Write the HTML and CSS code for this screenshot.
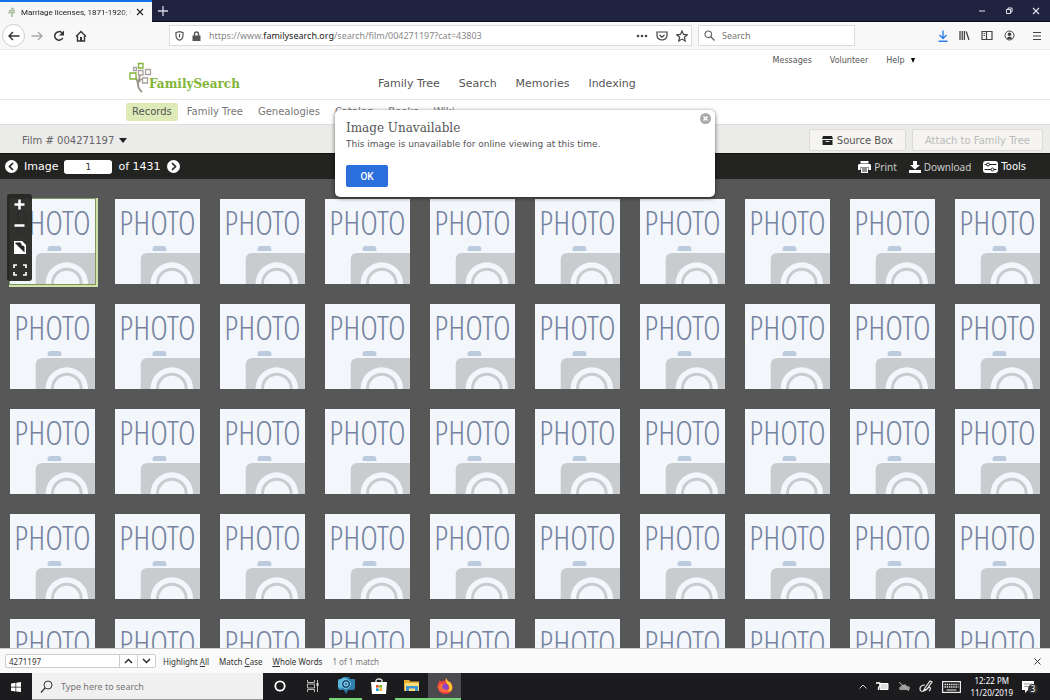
FILE: index.html
```
<!DOCTYPE html>
<html lang="en">
<head>
    <meta charset="UTF-8">
    <meta name="viewport" content="width=device-width, initial-scale=1.0">
    <title>Marriage licenses, 1871-1920</title>
    <link rel="stylesheet" href="styles.css">
</head>

<body>
    <!-- browser window -->
    <div class="title_bar">
        <div class="tab">
            <svg width="10" height="10" viewBox="0 0 10 10"><path d="M5 10V6M2 3.500h6M1 5.500h7M4 1.500h3" fill="none" stroke="#a9bd9b" stroke-width="1.600"/></svg>
            <span class="tab_title">Marriage licenses, 1871-1920; index</span>
            <button class="icon_button" aria-label="Close tab"><svg width="8" height="8" viewBox="0 0 8 8"><path d="M1 1l6 6M7 1L1 7" stroke="#222" stroke-width="1.1"/></svg></button>
        </div>
        <button class="icon_button new_tab" aria-label="New tab"><svg width="10" height="10" viewBox="0 0 10 10"><path d="M5 0v10M0 5h10" stroke="#d5d6e2" stroke-width="1.3"/></svg></button>
        <div class="window_buttons">
            <button class="icon_button" aria-label="Minimize"><svg width="8" height="8" viewBox="0 0 8 8"><path d="M1 4h6" stroke="#e2e3ee"/></svg></button>
            <button class="icon_button" aria-label="Restore"><svg width="8" height="8" viewBox="0 0 8 8"><path d="M1.500 2.500h4v4h-4zM3 2.500V1h4v4H5.500" fill="none" stroke="#e2e3ee"/></svg></button>
            <button class="icon_button" aria-label="Close"><svg width="8" height="8" viewBox="0 0 8 8"><path d="M1 1l6 6M7 1L1 7" stroke="#e2e3ee" stroke-width="1.100"/></svg></button>
        </div>
    </div>

    <div class="nav_bar">
        <div class="nav_buttons">
            <button class="icon_button back" aria-label="Back"><svg width="12" height="10" viewBox="0 0 12 10"><path d="M11.500 5H1M5 1L1 5l4 4" fill="none" stroke="#333" stroke-width="1.400"/></svg></button>
            <button class="icon_button" aria-label="Forward"><svg width="12" height="10" viewBox="0 0 12 10"><path d="M.5 5H11M7 1l4 4-4 4" fill="none" stroke="#aaa" stroke-width="1.400"/></svg></button>
            <button class="icon_button" aria-label="Reload"><svg width="12" height="12" viewBox="0 0 12 12"><path d="M9.800 8A4.300 4.300 0 1 1 9 2.800" fill="none" stroke="#333" stroke-width="1.500"/><path d="M11 .5v5H6z" fill="#333"/></svg></button>
            <button class="icon_button" aria-label="Home"><svg width="12" height="12" viewBox="0 0 12 12"><path d="M1 6.500L6 1.500l5 5M2.500 6v5h7V6" fill="none" stroke="#333" stroke-width="1.400"/><path d="M5 7h2v4H5z" fill="#333"/></svg></button>
        </div>
        <div class="url_box">
            <svg width="9" height="10" viewBox="0 0 9 10"><path d="M1 1.500L4.500.7 8 1.500v3Q8 8 4.500 9.300 1 8 1 4.500z" fill="none" stroke="#555" stroke-width="1.200"/><path d="M4.500 3v3.500" stroke="#555" stroke-width="1.200"/></svg>
            <svg width="9" height="10" viewBox="0 0 9 10"><path d="M2.500 5V3a2 2 0 0 1 4 0v2" fill="none" stroke="#555" stroke-width="1.400"/><path d="M.5 4.500h8V10h-8z" fill="#555"/></svg>
            <span class="url">https://www.<b>familysearch.org</b>/search/film/004271197?cat=43803</span>
            <button class="icon_button" aria-label="Page actions"><svg width="12" height="4" viewBox="0 0 12 4"><g fill="#444"><circle cx="2" cy="2" r="1.300"/><circle cx="6" cy="2" r="1.300"/><circle cx="10" cy="2" r="1.300"/></g></svg></button>
            <button class="icon_button" aria-label="Save to Pocket"><svg width="12" height="10" viewBox="0 0 12 10"><path d="M1 1h10v3.500a5 4.500 0 0 1-10 0zM3.500 4L6 6.300 8.500 4" fill="none" stroke="#444" stroke-width="1.200"/></svg></button>
            <button class="icon_button" aria-label="Bookmark"><svg width="12" height="12" viewBox="0 0 12 12"><path d="M6 1l1.500 3.400 3.700.4-2.800 2.500.8 3.700L6 9.100 2.800 11l.8-3.700L.8 4.800l3.700-.4z" fill="none" stroke="#444" stroke-width="1.200"/></svg></button>
        </div>
        <label class="search_box">
            <svg width="11" height="11" viewBox="0 0 11 11"><circle cx="4.300" cy="4.300" r="3.300" fill="none" stroke="#666" stroke-width="1.200"/><path d="M6.800 6.800L10.500 10.500" stroke="#666" stroke-width="1.300"/></svg>
            <input type="text" placeholder="Search" aria-label="Search the web">
        </label>
        <div class="browser_tools">
            <button class="icon_button" aria-label="Downloads"><svg width="10" height="12" viewBox="0 0 10 12"><path d="M5 .5v8M1.500 5L5 8.500 8.500 5M.5 11.200h9" fill="none" stroke="#2d7fe6" stroke-width="1.400"/></svg></button>
            <button class="icon_button" aria-label="Library"><svg width="11" height="11" viewBox="0 0 11 11"><path d="M1 1v9M3.200 1v9M5.400 1v9M7.200 1.500L10 10" stroke="#444" stroke-width="1.300"/></svg></button>
            <button class="icon_button" aria-label="Sidebars"><svg width="12" height="11" viewBox="0 0 12 11"><path d="M1 1.500h10v8H1zM5.500 1.500v8M2.500 3.500H4M2.500 5.500H4" fill="none" stroke="#444" stroke-width="1.200"/></svg></button>
            <button class="icon_button" aria-label="Account"><svg width="11" height="11" viewBox="0 0 11 11"><circle cx="5.500" cy="5.500" r="4.500" fill="none" stroke="#444"/><circle cx="5.500" cy="4.300" r="1.800" fill="#444"/><path d="M2.500 8.300q3-3.500 6 0-3 2-6 0" fill="#444"/></svg></button>
            <button class="icon_button menu_button" aria-label="Menu"><svg width="10" height="10" viewBox="0 0 10 10"><path d="M1 1.500h8M1 5h8M1 8.500h8" stroke="#444" stroke-width="1.200"/></svg></button>
        </div>
    </div>

    <!-- site header -->
    <header class="site_header">
        <a class="logo" href="#" aria-label="FamilySearch home">
            <svg width="23" height="31" viewBox="0 0 23 31">
                <path d="M13 30Q7 25 10 18L11 12M9 24Q9 17 5 14M10 20Q11 17 14 17" fill="none" stroke="#9c948b" stroke-width="1.700"/>
                <g fill="#fff" stroke-width="1.300">
                    <path d="M9.500 1.500h4.500v4.500H9.500zM1 11h6v6H1z" stroke="#82b536"/>
                    <path d="M4.500 5.500h3v3h-3zM9.500 8.500h4.500v4.500H9.500zM16.500 7.500h5v5h-5zM13.500 16h5v5h-5z" stroke="#aaa39d"/>
                </g>
            </svg>
            <span class="logo_text">FamilySearch</span>
        </a>
        <nav class="main_nav">
            <a href="#">Family Tree</a>
            <a href="#">Search</a>
            <a href="#">Memories</a>
            <a href="#">Indexing</a>
        </nav>
        <nav class="user_nav">
            <a href="#">Messages</a>
            <a href="#">Volunteer</a>
            <a href="#">Help <svg class="caret" width="4" height="5" viewBox="0 0 4 5"><path d="M0 0h4L2 5z"/></svg></a>
        </nav>
    </header>
    <nav class="sub_nav">
        <a class="current" href="#">Records</a>
        <a href="#">Family Tree</a>
        <a href="#">Genealogies</a>
        <a href="#">Catalog</a>
        <a href="#">Books</a>
        <a href="#">Wiki</a>
    </nav>

    <div class="film_bar">
        <button class="film_select">Film # 004271197 <svg width="8" height="5" viewBox="0 0 8 5"><path d="M0 0h8L4 5z" fill="#222"/></svg></button>
        <button class="film_action"><svg width="11" height="9" viewBox="0 0 11 9"><path d="M1 0h9l1 3H0zM.5 4h10v5H.5z" fill="#222"/><path d="M3.500 5.500h4" stroke="#ddd"/></svg>Source Box</button>
        <button class="film_action" disabled>Attach to Family Tree</button>
    </div>

    <div class="image_bar">
        <button class="icon_button" aria-label="Previous image"><svg width="13" height="13" viewBox="0 0 13 13"><circle cx="6.500" cy="6.500" r="6.500" fill="#fff"/><path d="M8 3L4.500 6.500 8 10" fill="none" stroke="#222" stroke-width="1.700"/></svg></button>
        <label for="image_number">Image</label>
        <input type="text" id="image_number" value="1">
        <span>of 1431</span>
        <button class="icon_button" aria-label="Next image"><svg width="13" height="13" viewBox="0 0 13 13"><circle cx="6.500" cy="6.500" r="6.500" fill="#fff"/><path d="M5 3l3.500 3.500L5 10" fill="none" stroke="#222" stroke-width="1.700"/></svg></button>
        <div class="image_tools">
            <button><svg width="13" height="12" viewBox="0 0 13 12"><path d="M2.500 0h8v2.500h-8zM1 3h11l1 1v5h-2.500V6h-8v3H0V4z" fill="#fff"/><path d="M3 6.500h7V12H3z" fill="#fff"/><path d="M4 8h5M4 10h5" stroke="#222"/></svg>Print</button>
            <button><svg width="12" height="12" viewBox="0 0 12 12"><path d="M4 0h4v4h3L6 8.500 1 4h3zM0 9h12v3H0z" fill="#fff"/></svg>Download</button>
            <button class="tools"><svg width="15" height="12" viewBox="0 0 15 12"><rect width="15" height="12" rx="3" fill="#fff"/><path d="M1.500 3.500h12M1.500 8.500h12" stroke="#222" stroke-width="1.200"/><circle cx="5" cy="3.500" r="1.500" fill="#fff" stroke="#222"/><circle cx="9.500" cy="8.500" r="1.500" fill="#fff" stroke="#222"/></svg>Tools</button>
        </div>
    </div>

    <main class="viewer">
        <div class="thumbs" id="thumbs"></div>
        <div class="zoom_tools">
            <button class="icon_button" aria-label="Zoom in"><svg width="11" height="11" viewBox="0 0 11 11"><path d="M5.500 .5v10M.5 5.500h10" stroke="#fff" stroke-width="2.500"/></svg></button>
            <button class="icon_button" aria-label="Zoom out"><svg width="11" height="11" viewBox="0 0 11 11"><path d="M.5 5.500h10" stroke="#fff" stroke-width="2.500"/></svg></button>
            <button class="icon_button" aria-label="Invert colors"><svg width="12" height="13" viewBox="0 0 12 13"><path d="M0 0h8l4 4v9H0z" fill="#fff"/><path d="M1.500 2.500l9 9V6L6.500 1.500h-5z" fill="#222"/><path d="M7.500 0v4.500H12" fill="#fff"/></svg></button>
            <button class="icon_button" aria-label="Full screen"><svg width="14" height="12" viewBox="0 0 14 12"><path d="M1 4V1h3M10 1h3v3M13 8v3h-3M4 11H1V8" fill="none" stroke="#fff" stroke-width="1.700"/></svg></button>
        </div>
    </main>

    <div class="dialog" role="dialog" aria-labelledby="dialog_title">
        <button class="icon_button dialog_close" aria-label="Close dialog"><svg width="11" height="11" viewBox="0 0 11 11"><circle cx="5.500" cy="5.500" r="5.500" fill="#aaa"/><path d="M3.500 3.500l4 4M7.500 3.500l-4 4" stroke="#fff" stroke-width="1.500"/></svg></button>
        <h2 id="dialog_title">Image Unavailable</h2>
        <p>This image is unavailable for online viewing at this time.</p>
        <button class="ok">OK</button>
    </div>

    <!-- find in page -->
    <div class="find_bar">
        <div class="find_field">
            <input type="text" value="4271197" aria-label="Find in page">
            <button class="icon_button" aria-label="Find previous"><svg width="9" height="6" viewBox="0 0 9 6"><path d="M1 5l3.500-3.500L8 5" fill="none" stroke="#222" stroke-width="1.400"/></svg></button>
            <button class="icon_button" aria-label="Find next"><svg width="9" height="6" viewBox="0 0 9 6"><path d="M1 1l3.500 3.500L8 1" fill="none" stroke="#222" stroke-width="1.400"/></svg></button>
        </div>
        <button class="find_option">Highlight <u>A</u>ll</button>
        <button class="find_option">Match <u>C</u>ase</button>
        <button class="find_option"><u>W</u>hole Words</button>
        <span class="find_result">1 of 1 match</span>
        <button class="icon_button find_close" aria-label="Close find bar"><svg width="7" height="7" viewBox="0 0 7 7"><path d="M.5.5l6 6M6.500.5l-6 6" stroke="#333"/></svg></button>
    </div>

    <!-- windows taskbar -->
    <div class="taskbar">
        <button class="icon_button start" aria-label="Start"><svg width="10" height="10" viewBox="0 0 10 10"><path d="M0 1.500l4.500-.7v4H0zM5.200.7L10 0v4.800H5.200zM0 5.400h4.500v4L0 8.700zM5.200 5.400H10V10l-4.800-.6z" fill="#fff"/></svg></button>
        <label class="task_search">
            <svg width="13" height="13" viewBox="0 0 13 13"><circle cx="8" cy="5" r="4" fill="none" stroke="#333"/><path d="M5 8L1 12.500" stroke="#333" stroke-width="1.200"/></svg>
            <input type="text" placeholder="Type here to search" aria-label="Windows search">
        </label>
        <div class="task_apps">
            <button class="icon_button" aria-label="Cortana"><svg width="12" height="12" viewBox="0 0 12 12"><circle cx="6" cy="6" r="4.700" fill="none" stroke="#fff" stroke-width="1.800"/></svg></button>
            <button class="icon_button" aria-label="Task view"><svg width="12" height="12" viewBox="0 0 12 12"><path d="M.5 0v2.500h7V0M.5 12V9.500h7V12M.5 4h7v4h-7zM10.500 0v12M10.500 3.500v3" fill="none" stroke="#bbb"/><path d="M9.500 3h2v3h-2z" fill="#ddd"/></svg></button>
            <button class="icon_button open" aria-label="Camera"><svg width="18" height="17" viewBox="0 0 18 17"><path d="M2 2h3l1-2h6l1 2h4q1 0 1 1v8q0 2-2 2h-5l-2 4-2-4H3q-2 0-2-2V3q0-1 1-1z" fill="#2e7fae"/><path d="M1 4q4-4 8-3v5L4 12 1 10z" fill="#5db8de"/><circle cx="9" cy="7" r="4.500" fill="#174e78" stroke="#7fd0e8"/><circle cx="9" cy="7" r="2" fill="#2e87b1" stroke="#a5e2ef"/></svg></button>
            <button class="icon_button" aria-label="Store"><svg width="16" height="16" viewBox="0 0 16 16"><path d="M5 5V3q0-2 3-2t3 2v2" fill="none" stroke="#ddd" stroke-width="1.400"/><path d="M0 4h16l-1 12H1z" fill="#fff"/><path d="M5 7h2.700v2.700H5z" fill="#e5532e"/><path d="M8.300 7H11v2.700H8.300z" fill="#79b51c"/><path d="M5 10.300h2.700V13H5z" fill="#1b9ee0"/><path d="M8.300 10.300H11V13H8.300z" fill="#f5b51b"/></svg></button>
            <button class="icon_button open" aria-label="File explorer"><svg width="16" height="13" viewBox="0 0 16 13"><path d="M0 1h5l1.500 1.500H15V12H0z" fill="#e5ae35"/><path d="M1 4h14v8H1z" fill="#fbdc7b"/><path d="M2 12V7h12v5h-3V9.500H5V12z" fill="#3b94cf"/></svg></button>
            <button class="icon_button open active" aria-label="Firefox"><svg width="16" height="16" viewBox="0 0 16 16"><path d="M2 4l1-2 1.500 2Q6 2 8 3L9 0q1 3 4 4 3 3 2.500 6.500Q14 16 8 16T.5 9.500Q.3 6 2 4z" fill="#f4403f"/><path d="M9 0q1 3 4 4 4 5 1 9l-4 1q4-4 1-7Q8 5 9 0z" fill="#ffc52f"/><circle cx="8" cy="9" r="3.500" fill="#8f45c8"/><path d="M1 8q2-3 6-2L5 8q0 4 6 4-3 4-7 1-3-2-3-5z" fill="#ff7139"/></svg></button>
        </div>
        <div class="tray">
            <svg width="8" height="5" viewBox="0 0 8 5"><path d="M.5 4.500L4 1l3.500 3.500" fill="none" stroke="#ccc"/></svg>
            <svg width="13" height="9" viewBox="0 0 13 9"><path d="M4 1.500h8v6H4z" fill="#ddd" stroke="#fff"/><path d="M0 1h4v3L2.500 5.500V8M1 0v2M3 0v2" fill="none" stroke="#fff" stroke-width="1.200"/></svg>
            <svg width="12" height="9" viewBox="0 0 12 9"><path d="M2 8q-2-2 0-3 1-2 3-2 2-2 4 1 3 0 3 2t-2 2z" fill="#999"/><path d="M1 0l10 9" stroke="#bbb"/></svg>
            <svg width="14" height="13" viewBox="0 0 14 13"><path d="M6 8L11 1l2 1-5 7-3 1zM6 5Q1 5 1 9q0 3 4 2 3-1 5-4 3 1 0 4" fill="none" stroke="#eee" stroke-width="1.200"/></svg>
            <svg width="19" height="12" viewBox="0 0 19 12"><rect x=".6" y=".6" width="17.800" height="10.800" fill="none" stroke="#eee" stroke-width="1.200"/><path d="M2.500 3.500h14M2.500 6h14" stroke="#eee" stroke-width="1.300" stroke-dasharray="1.400 .8"/><path d="M4.500 9h10" stroke="#eee"/></svg>
            <div class="clock"><span>12:22 PM</span><span>11/20/2019</span></div>
            <div class="notices">
                <svg width="12" height="12" viewBox="0 0 12 12"><path d="M0 0h12v9H6l-3 3V9H0z" fill="#fff"/><path d="M2 3h8M2 5.500h8" stroke="#999"/></svg>
                <span class="badge">3</span>
            </div>
        </div>
    </div>

    <script src="script.js"></script>
</body>
</html>
```
FILE: styles.css
```
*{
    box-sizing: border-box;
}

body{
    margin: 0;
    height: 100vh;
    display: flex;
    flex-direction: column;
    overflow: hidden;
    font-family: "DejaVu Sans", Verdana, sans-serif;
    font-size: 10px;
    color: #555;
    background-color: #fff;
}

a{
    color: inherit;
    text-decoration: none;
}

button, input{
    font: inherit;
    color: inherit;
    border: 0;
    padding: 0;
    background: none;
}

svg{
    display: block;
    flex: none;
}

.icon_button{
    display: flex;
    align-items: center;
    justify-content: center;
    flex: none;
}

/* browser window */
.title_bar, .nav_bar, .find_bar, .taskbar{
    flex: none;
    display: flex;
    align-items: center;
    font-family: "Noto Sans", "Segoe UI", sans-serif;
}

.title_bar{
    height: 22px;
    background-color: #20233f;
    border-bottom: 1px solid #0b0c1c;
}

.tab{
    display: flex;
    align-items: center;
    align-self: stretch;
    gap: 4px;
    width: 152px;
    height: 22px;
    padding: 0 8px 0 7px;
    background-color: #f7f7f8;
    border-top: 2px solid #1073e6;
    color: #222;
    font-family: Roboto, sans-serif;
    font-size: 8px;
}

.tab_title{
    flex: 1;
    overflow: hidden;
    white-space: nowrap;
    mask-image: linear-gradient(to right, #000 90%, transparent);
}

.new_tab{
    margin-left: 6px;
}

.window_buttons{
    display: flex;
    gap: 19px;
    margin-left: auto;
    padding-right: 10px;
}

.nav_bar{
    height: 28px;
    background-color: #f8f8f9;
    border-bottom: 1px solid #ececec;
}

.nav_buttons{
    display: flex;
    align-items: center;
    gap: 10px;
    width: 169px;
    padding-left: 2px;
}

.back{
    width: 23px;
    height: 23px;
    margin-right: -4px;
    border: 1px solid #ccc;
    border-radius: 50%;
    background-color: #fff;
}

.url_box, .search_box{
    display: flex;
    align-items: center;
    height: 21px;
    background-color: #fff;
    border: 1px solid #dcdcdc;
}

.url_box{
    flex: 1;
    gap: 8px;
    padding: 0 3px 0 5px;
    margin-right: 6px;
}

.url{
    flex: 1;
    font-size: 9px;
    color: #888;
}

.url b{
    font-weight: normal;
    color: #222;
}

.search_box{
    width: 157px;
    gap: 7px;
    padding-left: 5px;
}

.search_box input{
    width: 100px;
    font-size: 9px;
}

input::placeholder{
    color: #777;
    opacity: 1;
}

.browser_tools{
    display: flex;
    align-items: center;
    gap: 11px;
    width: 195px;
    justify-content: flex-end;
    padding-right: 8px;
}

.menu_button{
    margin-left: 6px;
}

/* site header */
.site_header{
    flex: none;
    display: flex;
    height: 50px;
    padding-left: 129px;
    border-bottom: 1px solid #e8e8e8;
}

.logo{
    display: flex;
    width: 249px;
    padding-top: 12px;
}

.logo_text{
    margin-left: -3px;
    padding-top: 14px;
    font-family: "DejaVu Serif", serif;
    font-size: 12px;
    line-height: 16px;
    font-weight: bold;
    color: #82b536;
}

.main_nav{
    display: flex;
    gap: 19px;
    padding-top: 27px;
    font-size: 11px;
    line-height: 14px;
}

.user_nav{
    display: flex;
    gap: 18px;
    margin-left: auto;
    padding: 5px 135px 0 0;
    font-size: 8px;
    line-height: 12px;
}

.caret{
    display: inline-block;
    margin-left: 4px;
}

.sub_nav{
    flex: none;
    display: flex;
    align-items: center;
    gap: 3px;
    height: 24px;
    padding-left: 126px;
    color: #777;
}

.sub_nav a{
    padding: 0 6px;
    line-height: 18px;
    border-radius: 2px;
}

.sub_nav .current{
    background-color: #deebb8;
    color: #555;
}

.film_bar{
    flex: none;
    display: flex;
    align-items: center;
    gap: 6px;
    height: 29px;
    padding: 2px 7px 0 22px;
    background-color: #ebebea;
    border-top: 1px solid #dedede;
}

.film_select{
    display: flex;
    align-items: center;
    gap: 5px;
    margin-right: auto;
    color: #666;
}

.film_action{
    display: flex;
    align-items: center;
    gap: 4px;
    height: 22px;
    padding: 0 12px;
    background-color: #f5f4f1;
    border: 1px solid #dddcd4;
    border-radius: 2px;
}

.film_action:disabled{
    color: #bbb;
}

.image_bar{
    flex: none;
    display: flex;
    align-items: center;
    gap: 6px;
    height: 26px;
    padding: 0 24px 0 5px;
    background-color: #232321;
    border-top: 1px solid #111;
    font-size: 11px;
    color: #fff;
}

#image_number{
    width: 48px;
    height: 14px;
    border-radius: 3px;
    background-color: #fff;
    color: #333;
    font-size: 9px;
    text-align: center;
}

.image_tools{
    display: flex;
    gap: 12px;
    margin-left: auto;
    font-family: "Noto Sans", sans-serif;
    font-size: 10px;
    color: #ccc;
}

.image_tools button{
    display: flex;
    align-items: center;
    gap: 3px;
}

.image_tools .tools{
    color: #fff;
    font-family: "DejaVu Sans", sans-serif;
}

/* thumbnails */
.viewer{
    position: relative;
    flex: 1;
    min-height: 0;
    overflow: hidden;
    background-color: #575757;
}

.thumbs{
    display: grid;
    grid-template-columns: repeat(auto-fill, minmax(80px, 1fr));
    gap: 20px;
    padding: 20px 10px;
}

.thumb{
    display: flex;
    flex-direction: column;
    justify-content: space-between;
    align-items: center;
    aspect-ratio: 1;
    overflow: hidden;
    background-color: #f3f7fb;
}

.thumb.selected{
    box-shadow: 0 0 0 1px #7f9560, 1px 1px 0 2px #cfe3a9;
}

.thumb_text{
    font-family: "Open Sans Condensed Light", "Liberation Sans Narrow", sans-serif;
    font-size: 34px;
    font-weight: 300;
    line-height: 47px;
    color: #7583a0;
}

.thumb svg{
    width: 100%;
    height: auto;
}

.zoom_tools{
    position: absolute;
    top: 15px;
    left: 7px;
    display: flex;
    flex-direction: column;
    justify-content: space-around;
    width: 25px;
    height: 87px;
    border-radius: 3px;
    background-color: rgba(38, 38, 36, .95);
}

/* message over the page */
.dialog{
    position: absolute;
    top: 110px;
    left: 50%;
    width: 380px;
    transform: translateX(-50%);
    padding: 10px 11px;
    background-color: #fff;
    border-radius: 5px;
    box-shadow: 0 1px 4px rgba(0, 0, 0, .6);
}

.dialog h2{
    margin: 0;
    font-family: "DejaVu Serif", serif;
    font-size: 12px;
    line-height: 16px;
    font-weight: normal;
}

.dialog p{
    margin: 0 0 13px;
    font-size: 9px;
    line-height: 16px;
}

.dialog_close{
    position: absolute;
    top: 3px;
    right: 4px;
}

.ok{
    display: block;
    width: 42px;
    height: 22px;
    border-radius: 2px;
    background-color: #2b6fdc;
    color: #fff;
    font-family: Roboto, sans-serif;
    font-weight: 500;
}

/* find in page */
.find_bar{
    height: 25px;
    gap: 10px;
    padding: 0 9px 0 5px;
    background-color: #fafafa;
    border-top: 1px solid #ccc;
    font-size: 8px;
    color: #333;
}

.find_field{
    display: flex;
    width: 151px;
    height: 14px;
    border: 1px solid #ccc;
    border-radius: 2px;
    background-color: #fff;
    margin-right: -3px;
}

.find_field input{
    flex: 1;
    min-width: 0;
    padding-left: 3px;
}

.find_field button{
    width: 18px;
    border-left: 1px solid #ccc;
}

.find_result{
    color: #777;
}

.find_close{
    margin-left: auto;
}

/* windows taskbar */
.taskbar{
    height: 27px;
    background-color: #1c1c1f;
    color: #fff;
}

.start{
    width: 32px;
}

.task_search{
    display: flex;
    align-items: center;
    align-self: stretch;
    gap: 8px;
    width: 231px;
    padding-left: 8px;
    background-color: #f0f0f0;
    border-bottom: 1px solid #999;
}

.task_search input{
    flex: 1;
    font-size: 9px;
}

.task_apps{
    display: flex;
    align-self: stretch;
}

.task_apps button{
    width: 33px;
    border-bottom: 2px solid transparent;
}

.task_apps .open{
    border-bottom-color: #76d275;
}

.task_apps .active{
    background-color: #4b4b4f;
}

.tray{
    display: flex;
    align-items: center;
    gap: 9px;
    margin-left: auto;
    padding-right: 12px;
}

.clock{
    display: flex;
    flex-direction: column;
    align-items: center;
    font-size: 8px;
    line-height: 12px;
}

.notices{
    position: relative;
    width: 16px;
}

.badge{
    position: absolute;
    top: 3px;
    left: 6px;
    width: 10px;
    height: 10px;
    border-radius: 50%;
    background-color: #333;
    font-size: 8px;
    line-height: 10px;
    text-align: center;
}
```
FILE: script.js
```
const thumb_count = 50;
const thumbs = document.getElementById('thumbs');

for (let i = 1; i <= thumb_count; i++) {
    const thumb = document.createElement('button');
    thumb.className = i === 1 ? 'thumb selected' : 'thumb';
    thumb.setAttribute('aria-label', 'Photo ' + i);
    thumb.innerHTML = `
        <span class="thumb_text">PHOTO</span>
        <svg viewBox="0 0 86 39">
            <path d="M38 5V3q0-3 3-3h8q3 0 3 3v2z" fill="#bccbdd"/>
            <path d="M26 39V14q0-7 7-7h53v32z" fill="#c9cccf"/>
            <circle cx="57.5" cy="38" r="21.5" fill="#f3f7fb"/>
            <circle cx="57.5" cy="38" r="14.5" fill="none" stroke="#c9cccf" stroke-width="3"/>
        </svg>`;
    thumbs.appendChild(thumb);
}
```
